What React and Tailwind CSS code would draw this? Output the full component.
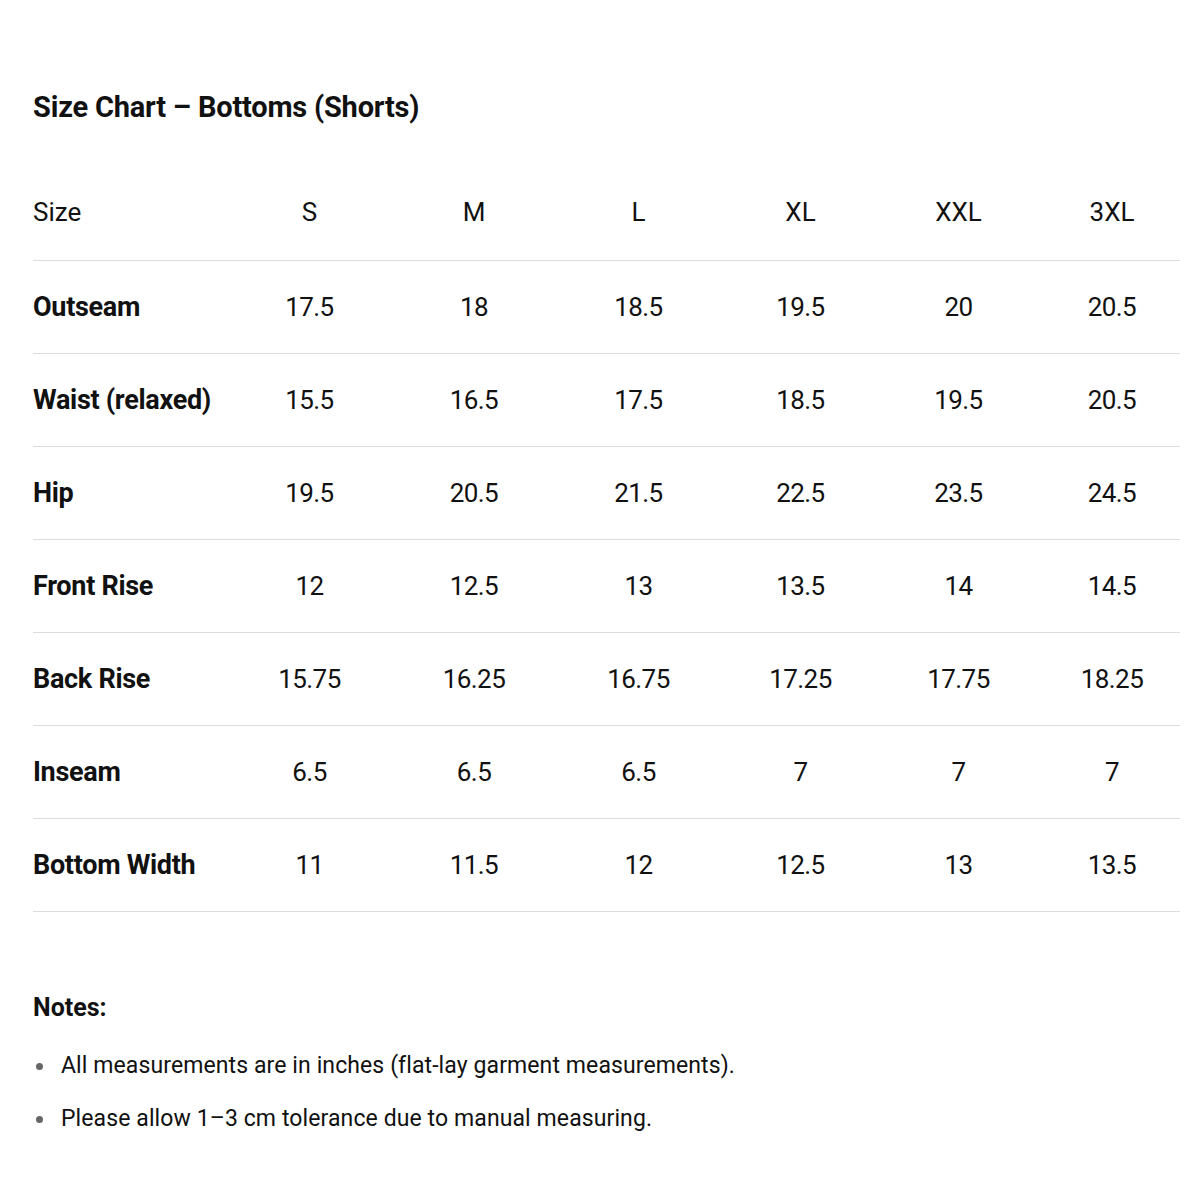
const sizes = ['S', 'M', 'L', 'XL', 'XXL', '3XL'];

const rows = [
  ['Outseam', '17.5', '18', '18.5', '19.5', '20', '20.5'],
  ['Waist (relaxed)', '15.5', '16.5', '17.5', '18.5', '19.5', '20.5'],
  ['Hip', '19.5', '20.5', '21.5', '22.5', '23.5', '24.5'],
  ['Front Rise', '12', '12.5', '13', '13.5', '14', '14.5'],
  ['Back Rise', '15.75', '16.25', '16.75', '17.25', '17.75', '18.25'],
  ['Inseam', '6.5', '6.5', '6.5', '7', '7', '7'],
  ['Bottom Width', '11', '11.5', '12', '12.5', '13', '13.5'],
];

const notes = [
  'All measurements are in inches (flat-lay garment measurements).',
  'Please allow 1–3 cm tolerance due to manual measuring.',
];

const cols = 'grid grid-cols-[195px_163px_166px_163px_161px_155px_152px] items-center';

export default function App() {
  return (
    <div
      className="w-[1200px] h-[1200px] bg-white text-[#111] pl-[33px] pr-[20px] pt-[87px] overflow-hidden"
      style={{ fontFamily: 'Roboto, "Liberation Sans", sans-serif' }}
    >
      <h1 className="text-[29px] leading-[40px] font-bold tracking-[-0.2px]">Size Chart – Bottoms (Shorts)</h1>

      <div className="mt-[57px]">
        <div className={`${cols} h-[77px] border-b border-[#dcdcdc] pb-[20px]`}>
          <div className="text-[26px]">Size</div>
          {sizes.map((s) => (
            <div key={s} className="text-[26px] text-center">{s}</div>
          ))}
        </div>
        {rows.map((r) => (
          <div key={r[0]} className={`${cols} h-[93px] border-b border-[#dcdcdc]`}>
            <div className="text-[27px] font-bold tracking-[-0.3px]">{r[0]}</div>
            {r.slice(1).map((v, i) => (
              <div key={i} className="text-[26px] text-center tracking-[-0.6px]">{v}</div>
            ))}
          </div>
        ))}
      </div>

      <div className="mt-[76px]">
        <h2 className="text-[25px] font-bold leading-[40px]">Notes:</h2>
        <ul className="mt-[20px] flex flex-col gap-[17px]">
          {notes.map((n) => (
            <li key={n} className="flex items-center text-[23px] leading-[36px] tracking-[0.1px]">
              <span className="w-[7px] h-[7px] rounded-full bg-[#666] ml-[3px] mr-[18px]" />
              {n}
            </li>
          ))}
        </ul>
      </div>
    </div>
  );
}
